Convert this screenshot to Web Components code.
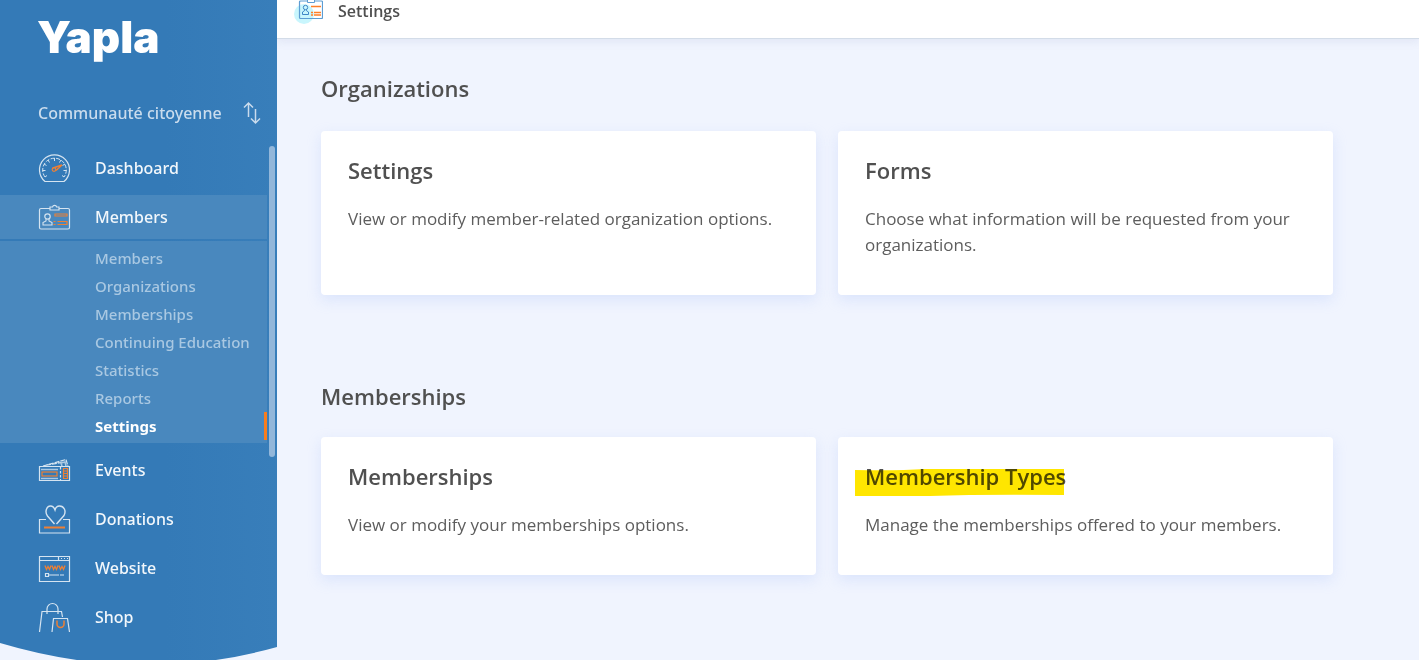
<!DOCTYPE html>
<html lang="en">
<head>
<meta charset="utf-8">
<title>Yapla – Settings</title>
<style>
html,body{margin:0;height:100%}
body{font-family:"Open Sans","Liberation Sans",sans-serif;background:#f0f4fe;color:#505050;overflow:hidden}
</style>
</head>
<body>
<yapla-app></yapla-app>

<template id="app">
<style>
:host{display:flex;align-items:flex-start;min-height:100vh}
main{flex:1;min-width:0}
.sections{display:flex;flex-direction:column;gap:86px;padding:34px 86px 84px 44px}
</style>
<yapla-sidebar></yapla-sidebar>
<main>
  <page-header>Settings</page-header>
  <div class="sections">
    <card-section heading="Organizations">
      <option-card heading="Settings">View or modify member-related organization options.</option-card>
      <option-card heading="Forms">Choose what information will be requested from your organizations.</option-card>
    </card-section>
    <card-section heading="Memberships">
      <option-card heading="Memberships">View or modify your memberships options.</option-card>
      <option-card heading="Membership Types" marked>Manage the memberships offered to your members.</option-card>
    </card-section>
  </div>
</main>
</template>

<template id="header">
<style>
:host{display:flex;align-items:flex-start;gap:15px;height:38px;padding-left:17px;background:#fff;border-bottom:1px solid #d3dce8;box-shadow:0 3px 8px rgba(120,140,180,.12)}
svg{display:block;width:29px;height:25px}
h1{margin:0;font-size:16px;line-height:22px;font-weight:600}
</style>
<svg viewBox="0 0 29 25" fill="none" aria-hidden="true">
  <circle cx="10" cy="14" r="10" fill="#c9f6fd"/>
  <rect x="5.500" y="1" width="23" height="17.500" rx="1" stroke="#5d9dd3" stroke-width="1.200"/>
  <path d="M13.500 0v2.500h7V0" fill="#fff" stroke="#5d9dd3"/>
  <circle cx="11.500" cy="7.500" r="2.200" stroke="#3f86c6"/>
  <path d="M10.500 9.500v1.200L8.500 12v2.500h6V12l-2-1.300V9.500" stroke="#3f86c6"/>
  <path d="M17 6.500h10M17 12.500h2m1 0h7M17 15h2m1 0h7" stroke="#ff7f27" stroke-width="1.400"/>
</svg>
<h1><slot></slot></h1>
</template>

<template id="section">
<style>
:host{display:block}
h2{margin:0 0 28px;font-size:22px;line-height:30px;font-weight:600}
:host(:not(:first-child)) h2{margin-bottom:26px}
.cards{display:grid;grid-template-columns:1fr 1fr;gap:22px}
</style>
<section><h2></h2><div class="cards"><slot></slot></div></section>
</template>

<template id="card">
<style>
:host{display:block;background:#fff;border-radius:4px;box-shadow:0 5px 14px rgba(175,195,250,.32);padding:25px 27px 37px}
h3{position:relative;display:table;margin:0 0 22px;font-size:22px;line-height:28px;font-weight:600}
p{margin:0;font-size:17px;line-height:26px;color:#5d5d5d}
svg{display:none;position:absolute;left:-10px;top:6px;width:209px;height:29px;mix-blend-mode:multiply}
:host([marked]) svg{display:block}
</style>
<h3><span></span><svg viewBox="0 0 209 29" preserveAspectRatio="none" aria-hidden="true"><path d="M0 2Q40 3 70 1H209V27Q130 26 75 28H0Z" fill="#ffe600"/></svg></h3>
<p><slot></slot></p>
</template>

<template id="sidebar">
<style>
:host{display:block;flex:0 0 277px;color:#fff;font-family:"Noto Sans","Open Sans",sans-serif}
.panel{position:relative;background:linear-gradient(90deg,#347ab7 60%,#387eba);padding-bottom:4px}
.logo{display:block;padding:13px 37px 0;font:900 44px/48px Inter,"Open Sans",sans-serif;color:#fff;text-decoration:none}
.org{display:flex;align-items:center;justify-content:space-between;box-sizing:border-box;width:100%;margin:40px 0 21px;padding:0 16px 0 38px;border:0;background:none;font-family:inherit;font-weight:500;font-size:16px;line-height:24px;color:#cadced;text-align:left}
.org svg{width:18px;height:24px}
nav{margin-right:10px}
ul{list-style:none;margin:0;padding:0}
.menu{display:flex;flex-direction:column;gap:5px}
.thumb{position:absolute;right:2px;top:146px;width:6px;height:311px;border-radius:3px;background:#93b7da}
.curve{display:block;width:100%;height:24px}
</style>
<aside>
<div class="panel">
  <a class="logo" href="#">Yapla</a>
  <button class="org" type="button"><span>Communauté citoyenne</span>
    <svg viewBox="0 0 18 24" fill="none" stroke="#cadced" stroke-width="1.500" aria-hidden="true"><path d="M5.500 16V2M1 6.500L5.500 2L10 6.500M12.500 8v14M8 17.500L12.500 22L17 17.500"/></svg>
  </button>
  <nav aria-label="Main">
    <ul class="menu">
      <li><nav-item icon="dashboard">Dashboard</nav-item></li>
      <li><nav-item icon="members" active>Members
        <sub-item slot="sub">Members</sub-item>
        <sub-item slot="sub">Organizations</sub-item>
        <sub-item slot="sub">Memberships</sub-item>
        <sub-item slot="sub">Continuing Education</sub-item>
        <sub-item slot="sub">Statistics</sub-item>
        <sub-item slot="sub">Reports</sub-item>
        <sub-item slot="sub" current>Settings</sub-item>
      </nav-item></li>
      <li><nav-item icon="events">Events</nav-item></li>
      <li><nav-item icon="donations">Donations</nav-item></li>
      <li><nav-item icon="website">Website</nav-item></li>
      <li><nav-item icon="shop">Shop</nav-item></li>
    </ul>
  </nav>
  <div class="thumb"></div>
</div>
<svg class="curve" viewBox="0 0 277 24" preserveAspectRatio="none" aria-hidden="true"><defs><linearGradient id="g"><stop offset=".6" stop-color="#347ab7"/><stop offset="1" stop-color="#387eba"/></linearGradient></defs><path d="M0 0H277V4Q141 42 0 0Z" fill="url(#g)"/></svg>
</aside>
</template>

<template id="item">
<style>
:host{display:block}
a{display:flex;align-items:center;gap:24px;height:44px;padding-left:38px;font-size:16px;line-height:24px;font-weight:500;color:#f2f7fb;text-decoration:none}
svg{display:block;width:33px;height:32px;flex:none}
.sub{display:none}
:host([active]) a{background:#4988be}
:host([active]) .sub{display:block;margin-top:2px;padding:3px 0;background:#4988be}
</style>
<a href="#"><svg viewBox="0 0 33 32" fill="none" stroke="#d5e4f1" stroke-width="1.200" aria-hidden="true"></svg><span><slot></slot></span></a>
<div class="sub"><slot name="sub"></slot></div>
</template>

<template id="subitem">
<style>
:host{display:block}
a{display:block;padding-left:95px;font-size:15px;line-height:28px;font-weight:500;color:#a9c8e2;text-decoration:none}
:host([current]) a{color:#fff;font-weight:700;border-right:3px solid #f97d1c}
</style>
<a href="#"><slot></slot></a>
</template>

<script>
const icons={
dashboard:'<path d="M7 29.500A15 15 0 1 1 26 29.500Z"/><path d="M7 25A11.800 11.800 0 1 1 26 25" stroke-dasharray="4 1.500" stroke-width="1"/><path d="M16.500 6v3M10 8l1.500 2.500M23 8l-1.500 2.500M6 12l2.500 1.500M27 12l-2.500 1.500M4.500 18.500h3M28.500 18.500h-3M7 25l2-1.500M26 25l-2-1.500" stroke-width="1"/><path d="M15 16l9-3-6 5.500" stroke="#ee8034" stroke-width="1.400"/><circle cx="16" cy="17.500" r="1.800" stroke="#ee8034"/>',
members:'<path d="M12 7.500H3Q1.500 7.500 1.500 9V26.500Q1.500 28 3 28H30Q31.500 28 31.500 26.500V9Q31.500 7.500 30 7.500H21"/><path d="M12 9V6h2.500a2.200 2.200 0 0 1 4.200 0H21v3Z"/><circle cx="9.500" cy="15.500" r="2.700"/><path d="M8 18v2l-3 1.500V24h9v-2.500L11 20v-2" stroke-width="1.100"/><path d="M17 13h12v2H17ZM15.500 20.500h2m2 0H29v3h-9.500M15.500 23.500h2" stroke="#ee8034" stroke-width="1.200"/>',
events:'<path d="M1.500 12.500h30v14h-30Z"/><path d="M5 12L28 5.500l2 7M8 11.200l17-3" stroke-dasharray="5 1"/><path d="M24 12l-1-3 4-1 1 4M3 15.500h17M3 24.500h17" stroke-width="1.600" stroke="#a9c8e2"/><path d="M22.500 13v14" stroke-dasharray="2.500 1.500"/><rect x="4" y="18" width="15" height="4" stroke="#ee8034"/><path d="M25.500 14.500h4v10h-4ZM25.500 17h4M25.500 19.500h4M25.500 22h4" stroke="#ee8034"/>',
donations:'<path d="M8 16.500H1.500v13.500h30V16.500H25"/><path d="M16.500 21L9.500 13C6.500 9 8.500 3 12.500 3Q15.500 3 17 7Q18 3 21.500 3C26 3 28.500 8 26 12.500L18.500 21" stroke-width="1.400"/><path d="M6 24.500h21" stroke="#ee8034" stroke-width="2"/>',
website:'<path d="M1.500 4.500h30V29.500h-30ZM1.500 8.500h30M20.500 4.500v4M23 6.500h1m2 0h1m2 0h1"/><path d="M7 13.500l1.500 4 1.500-3 1.500 3 1.500-4M14 13.500l1.500 4 1.500-3 1.500 3 1.500-4M21 13.500l1.500 4 1.500-3 1.500 3 1.500-4" stroke="#ee8034" stroke-width="1.300"/><path d="M7.500 21.500h3v3h-3ZM11 23h10m1 0h4"/>',
shop:'<path d="M1.500 31L4 10.500H23.500L24.500 16M9 13V8a5.500 5.500 0 0 1 11 0v5"/><path d="M14 31L15.500 17.500H29.500L31.500 31"/><path d="M19 19.500v3.500a3.500 3.500 0 0 0 7 0v-3.500" stroke="#ee8034" stroke-width="1.500"/>'
};
class Base extends HTMLElement{
  constructor(id){
    super();
    this.attachShadow({mode:'open'}).append(document.getElementById(id).content.cloneNode(true));
  }
}
customElements.define('sub-item',class extends Base{constructor(){super('subitem')}});
customElements.define('nav-item',class extends Base{
  constructor(){super('item')}
  connectedCallback(){this.shadowRoot.querySelector('svg').innerHTML=icons[this.getAttribute('icon')]}
});
customElements.define('option-card',class extends Base{
  constructor(){super('card')}
  connectedCallback(){this.shadowRoot.querySelector('span').textContent=this.getAttribute('heading')}
});
customElements.define('card-section',class extends Base{
  constructor(){super('section')}
  connectedCallback(){this.shadowRoot.querySelector('h2').textContent=this.getAttribute('heading')}
});
customElements.define('page-header',class extends Base{constructor(){super('header')}});
customElements.define('yapla-sidebar',class extends Base{constructor(){super('sidebar')}});
customElements.define('yapla-app',class extends Base{constructor(){super('app')}});
</script>
</body>
</html>
